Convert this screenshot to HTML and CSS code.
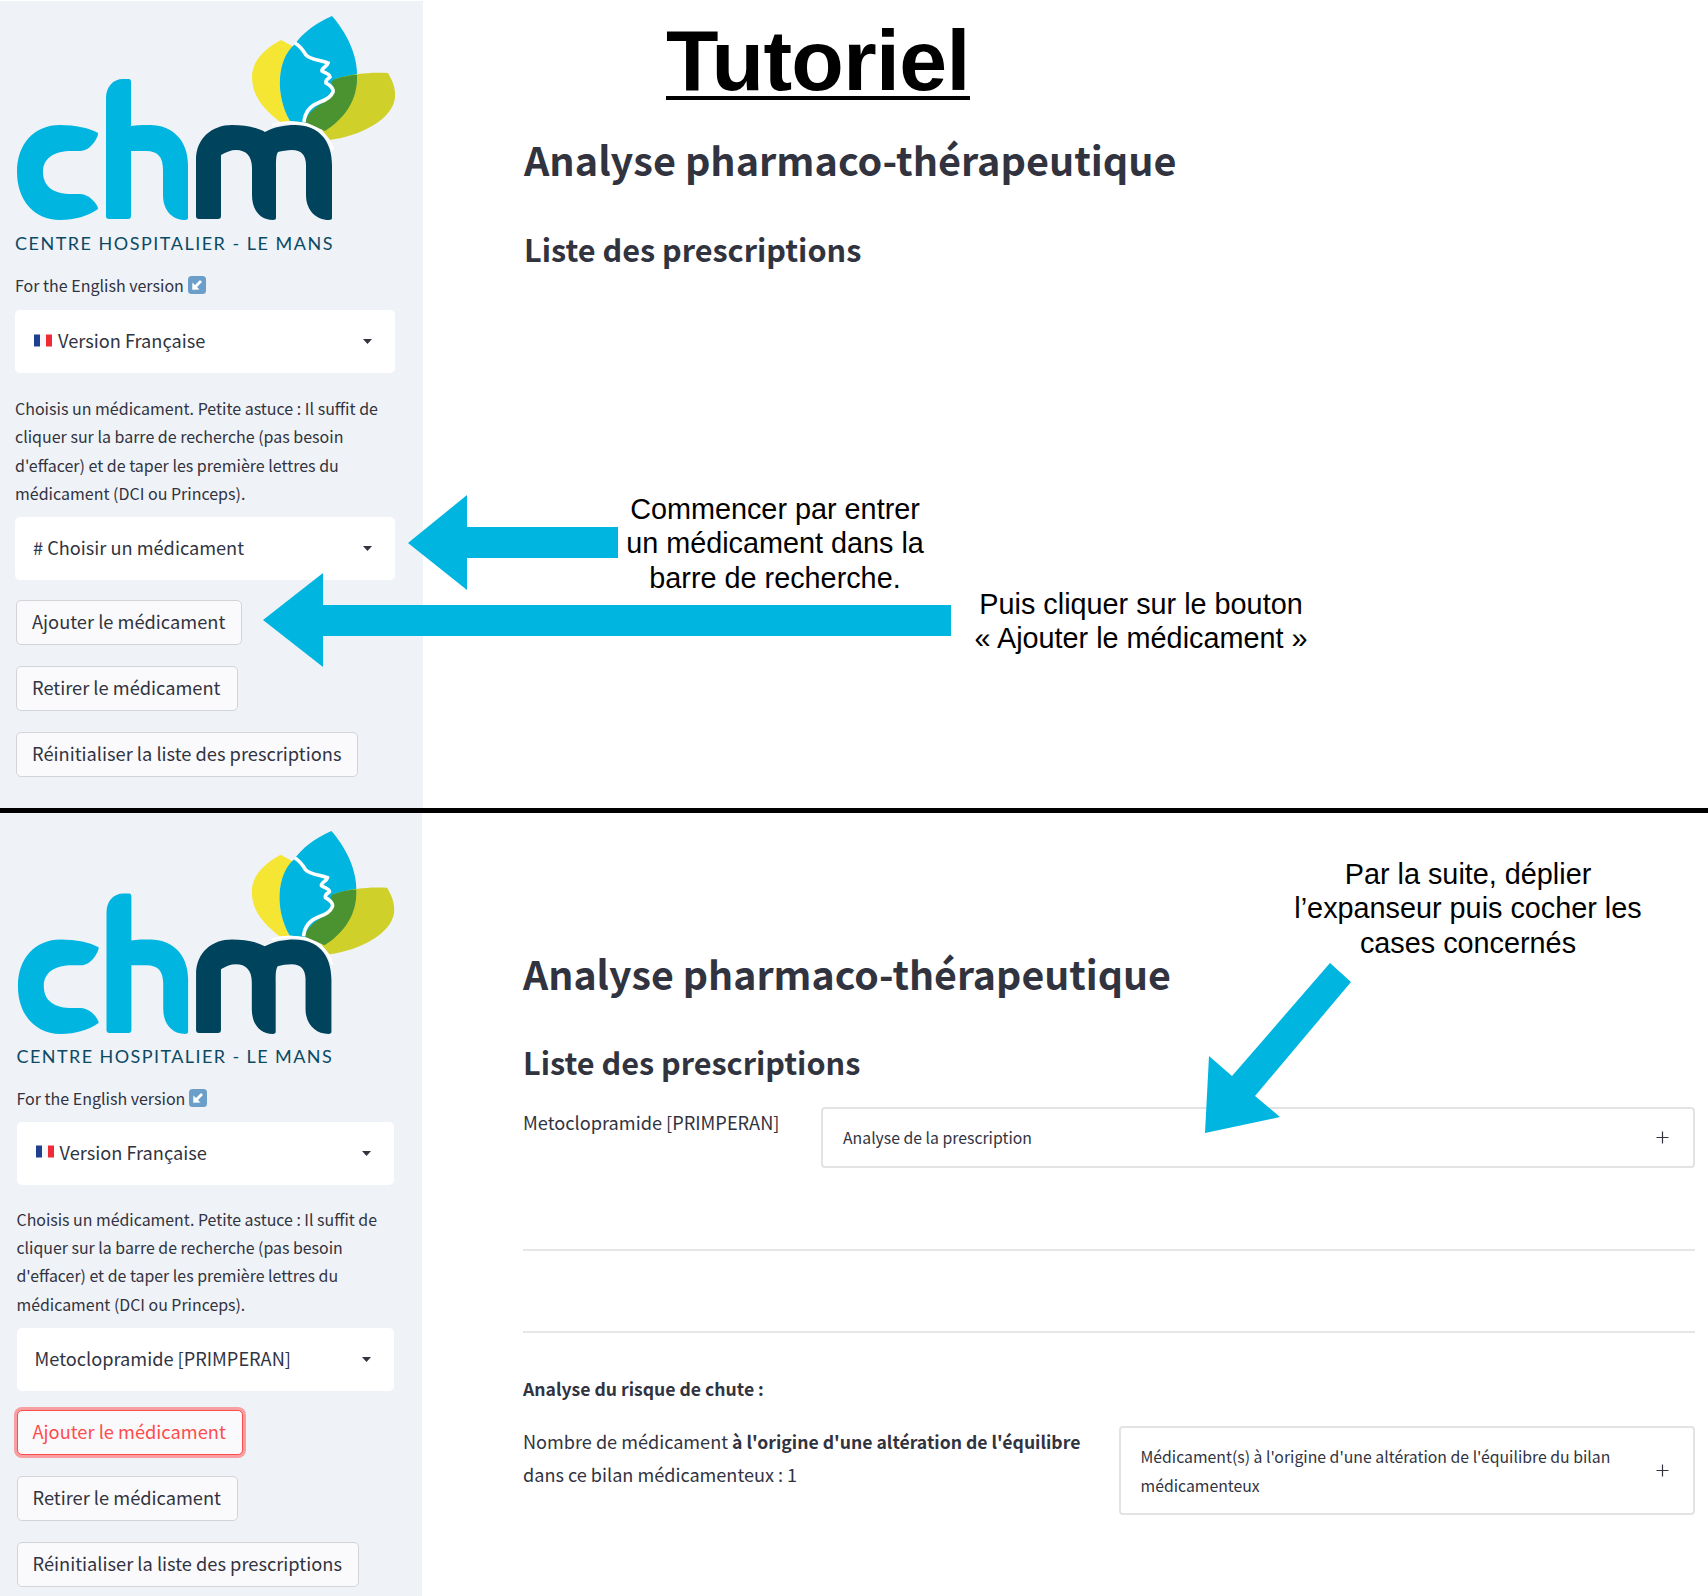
FILE: index.html
```html
<!DOCTYPE html>
<html lang="fr">
<head>
<meta charset="utf-8">
<title>Tutoriel</title>
<link rel="stylesheet" href="styles.css">
</head>
<body>
<svg class="defs" width="0" height="0" aria-hidden="true">
  <symbol id="chm" viewBox="0 1 423 230">
    <path fill="#f5e633" d="M281,40 L294,47 C277,60 275,95 290,121 L280,122 C265,110 252,97 252,77 C252,60 266,48 281,40Z"/>
    <path fill="#00b5e0" d="M332,16 C314,24 303,33 294,45 C277,60 275,95 290,121 L310,123 L325,130 C345,118 357,100 357,77 C358,55 346,32 332,16Z"/>
    <path fill="#cfd12a" d="M333,80 C348,74 370,72 388,73 C392,80 396,88 395,98 C392,120 360,136 330,140 L322,130 C345,118 357,100 357,76 C350,76 340,78 333,80Z"/>
    <path fill="#4b9331" d="M333,80 C340,77 350,75 357,75 C358,100 345,118 325,131 L305,122 C308,112 318,105 328,100 C336,95 335,88 331,83Z"/>
    <path fill="none" stroke="#fff" stroke-width="3.6" d="M295,43 C300,46 303,50 306,55 C311,60 320,60 328,63 C327,67 321,68 322,71 C325,73 330,74 330,77 C328,79 325,80 326,83 C330,85 334,89 333,92 C331,97 326,100 320,102 C312,105 305,110 304,122"/>
    <path fill="#00b5e0" d="M98,133 C99,135 92,151 80,151 L72,151 C54,151 43,158 43,172 C43,187 54,194 72,194 L80,194 C90,194 99,206 98,209 C88,216 75,220 60,220 C34,220 17,200 17,172 C17,144 34,125 60,125 C75,125 90,128 98,133Z"/>
    <path fill="#00b5e0" d="M123,79 L129,79 C130,79 131,80 131,82 L131,126 C137,125 142,125 150,125 C172,125 188,140 188,165 L188,218 C188,219 187,220 185,220 C172,220 163,210 163,195 L163,170 C163,157 158,151 146,151 L131,151 L131,216 C131,218 130,219 128,219 L109,219 C107,219 106,218 106,216 L106,98 C106,87 113,79 123,79Z"/>
    <path fill="#00435c" d="M196,160 C196,138 212,125 232,125 C245,125 256,127 265,132 C274,127 284,125 295,125 C318,125 332,140 332,165 L332,218 C332,219 331,220 329,220 C316,220 306,210 306,195 L306,165 C306,155 301,150 292,150 C287,150 282,151 278,152 C276,155 276,160 276,168 L276,218 C276,219 275,220 273,220 C260,220 252,210 252,195 L252,168 C252,156 246,150 236,150 C231,150 226,152 221,155 L221,216 C221,218 220,219 218,219 L199,219 C197,219 196,218 196,216Z"/>
    <path fill="none" stroke="#fff" stroke-width="2.4" d="M272,125 C281,122 290,122 298,123 C316,125 328,135 333,150"/>
  </symbol>
  <symbol id="flag" viewBox="0 0 18 13">
    <rect width="6" height="12" y="0.5" fill="#1f3f8f"/>
    <rect width="6" height="12" x="6" y="0.5" fill="#f7f7fa"/>
    <rect width="6" height="12" x="12" y="0.5" fill="#ee2a35"/>
  </symbol>
  <symbol id="arrow-emoji" viewBox="0 0 18 18">
    <rect width="18" height="18" rx="3.5" fill="#6b9fc9"/>
    <path fill="#fff" d="M14 6 L9 11 L11.5 13.6 L4.2 13.8 L4.4 6.5 L7 9 L12 4Z"/>
  </symbol>
  <symbol id="caret" viewBox="0 0 9 5">
    <path fill="#31333f" d="M0 0H9L4.5 5Z"/>
  </symbol>
  <symbol id="plus" viewBox="0 0 13 13">
    <path stroke="#31333f" stroke-width="1.2" d="M6.5 0.5V12.5M0.5 6.5H12.5"/>
  </symbol>
</svg>

<section class="panel panel-top">
  <aside class="sidebar">
    <svg class="logo"><use href="#chm"/></svg>
    <p class="logo-caption">CENTRE HOSPITALIER - LE MANS</p>
    <p class="lang-label">For the English version <svg class="emoji"><use href="#arrow-emoji"/></svg></p>
    <div class="select">
      <span class="select-value"><svg class="flag"><use href="#flag"/></svg>Version Française</span>
      <svg class="caret"><use href="#caret"/></svg>
    </div>
    <p class="hint">Choisis un médicament. Petite astuce : Il suffit de cliquer sur la barre de recherche (pas besoin d'effacer) et de taper les première lettres du médicament (DCI ou Princeps).</p>
    <div class="select select-med">
      <span class="select-value"># Choisir un médicament</span>
      <svg class="caret"><use href="#caret"/></svg>
    </div>
    <div class="actions">
      <button class="btn">Ajouter le médicament</button>
      <button class="btn">Retirer le médicament</button>
      <button class="btn">Réinitialiser la liste des prescriptions</button>
    </div>
  </aside>
  <main class="content">
    <h1 class="tuto"><span>Tutoriel</span></h1>
    <h2 class="title">Analyse pharmaco-thérapeutique</h2>
    <h3 class="subtitle">Liste des prescriptions</h3>
  </main>
  <svg class="overlay" viewBox="0 1 1708 807">
    <path fill="#00b5e0" d="M408,543 L467,495 V527 H618 V558 H467 V590Z"/>
    <path fill="#00b5e0" d="M263,620 L323,573 V605 H951 V636 H323 V667Z"/>
  </svg>
  <p class="note note-first">Commencer par entrer<br>un médicament dans la<br>barre de recherche.</p>
  <p class="note note-second">Puis cliquer sur le bouton<br>« Ajouter le médicament »</p>
</section>

<div class="separator"></div>

<section class="panel panel-bottom">
  <aside class="sidebar">
    <svg class="logo"><use href="#chm"/></svg>
    <p class="logo-caption">CENTRE HOSPITALIER - LE MANS</p>
    <p class="lang-label">For the English version <svg class="emoji"><use href="#arrow-emoji"/></svg></p>
    <div class="select">
      <span class="select-value"><svg class="flag"><use href="#flag"/></svg>Version Française</span>
      <svg class="caret"><use href="#caret"/></svg>
    </div>
    <p class="hint">Choisis un médicament. Petite astuce : Il suffit de cliquer sur la barre de recherche (pas besoin d'effacer) et de taper les première lettres du médicament (DCI ou Princeps).</p>
    <div class="select select-med">
      <span class="select-value">Metoclopramide [PRIMPERAN]</span>
      <svg class="caret"><use href="#caret"/></svg>
    </div>
    <div class="actions">
      <button class="btn btn-focus">Ajouter le médicament</button>
      <button class="btn">Retirer le médicament</button>
      <button class="btn">Réinitialiser la liste des prescriptions</button>
    </div>
  </aside>
  <main class="content">
    <h2 class="title">Analyse pharmaco-thérapeutique</h2>
    <h3 class="subtitle">Liste des prescriptions</h3>
    <div class="row row-drug">
      <p class="drug">Metoclopramide [PRIMPERAN]</p>
      <div class="expander">
        <span>Analyse de la prescription</span>
        <svg class="plus"><use href="#plus"/></svg>
      </div>
    </div>
    <hr class="rule rule-first">
    <hr class="rule rule-second">
    <p class="risk-title">Analyse du risque de chute :</p>
    <div class="row row-risk">
      <p class="risk">Nombre de médicament <strong>à l'origine d'une altération de l'équilibre</strong> dans ce bilan médicamenteux : 1</p>
      <div class="expander expander-tall">
        <span>Médicament(s) à l'origine d'une altération de l'équilibre du bilan médicamenteux</span>
        <svg class="plus"><use href="#plus"/></svg>
      </div>
    </div>
  </main>
  <svg class="overlay" viewBox="0 813 1708 783">
    <path fill="#00b5e0" d="M1330,963 L1351,982 L1255,1096 L1280,1117 L1205,1133 L1209,1056 L1232,1076Z"/>
  </svg>
  <p class="note note-third">Par la suite, déplier<br>l’expanseur puis cocher les<br>cases concernés</p>
</section>
</body>
</html>
```

FILE: styles.css
```css
* { box-sizing: border-box; }
html, body { margin: 0; padding: 0; background: #fff; }
body {
  width: 1708px;
  font-family: "Noto Sans CJK SC", "Source Sans Pro", "Noto Sans", sans-serif;
  color: #31333f;
}
p, h1, h2, h3 { margin: 0; }
.defs { position: absolute; }

.panel { position: relative; display: flex; }
.panel-top { height: 807px; margin-top: 1px; }
.panel-bottom { height: 783px; }
.separator { height: 5px; background: #000; }

.sidebar { background: #eff2f7; flex: none; display: flex; flex-direction: column; }
.panel-top .sidebar { width: 423px; padding-left: 15px; padding-right: 28px; }
.panel-bottom .sidebar { width: 422px; padding-left: 16.5px; padding-right: 28px; }

.logo { display: block; flex: none; width: 423px; height: 230px; margin-left: -15px; }
.panel-bottom .logo { width: 421px; height: 228.9px; margin-left: -15.5px; margin-top: 2.7px; }
.logo-caption { font-family: Lato, "Noto Sans", sans-serif; font-size: 18px; line-height: 24px; letter-spacing: 1.5px; color: #0b4a64; white-space: nowrap; }
.panel-bottom .logo-caption { margin-top: -1px; letter-spacing: 1.42px; }

.lang-label { display: flex; align-items: center; gap: 4px; font-size: 16px; line-height: 28px; margin-top: 16px; }
.emoji { width: 18px; height: 18px; flex: none; }
.flag { width: 18px; height: 13px; flex: none; margin-left: 1px; }

.select { display: flex; align-items: center; justify-content: space-between; height: 63px; margin-top: 11px; padding: 0 23px 3px 18px; background: #fff; border-radius: 5px; font-size: 18.2px; line-height: 28px; }
.panel-bottom .select { margin-top: 10px; }
.select-value { display: flex; align-items: center; gap: 6px; }
.caret { width: 9px; height: 5px; flex: none; margin-top: 3px; }
.panel-top .select-med { margin-top: 9px; }
.panel-bottom .select-med { margin-top: 9px; }

.hint { font-size: 16px; line-height: 28.4px; margin-top: 21px; }
.panel-bottom .hint { font-size: 15.9px; margin-top: 21px; }

.actions { display: flex; flex-direction: column; align-items: flex-start; gap: 21px; margin-top: 20px; padding-left: 1px; }
.panel-bottom .actions { padding-left: 0; margin-top: 19px; }
.btn { height: 45px; padding: 0 16px 3px 15px; background: #fafafc; border: 1.5px solid #d3d4d8; border-radius: 5px; font: inherit; font-size: 18.25px; line-height: 28px; color: #31333f; }
.btn-focus { color: #ff4b4b; border-color: #ff4b4b; box-shadow: 0 0 0 3px rgba(255, 75, 75, .5); }

.content { flex: 1; min-width: 0; padding-right: 13px; }
.panel-top .content { padding-left: 101px; }
.panel-bottom .content { padding-left: 101px; padding-top: 136px; }

.tuto { padding-left: 142px; font-family: "Liberation Sans", Arial, sans-serif; font-size: 86px; font-weight: 700; letter-spacing: -0.65px; line-height: 90px; color: #000; }
.tuto span { display: inline-block; border-bottom: 4px solid #000; height: 99px; line-height: 118px; margin-bottom: 35px; }
.title { font-size: 39.6px; font-weight: 600; line-height: 48px; }
.panel-bottom .title { font-size: 39.3px; }
.subtitle { font-size: 30.6px; font-weight: 600; line-height: 40px; }
.panel-top .subtitle { margin-top: 46px; }
.panel-bottom .subtitle { margin-top: 45px; }

.row { display: flex; align-items: flex-start; }
.row-drug { margin-top: 25px; gap: 42px; }
.drug { flex: none; width: 256px; font-size: 18.2px; line-height: 28px; margin-top: 1px; white-space: nowrap; }
.expander { flex: 1; min-width: 0; display: flex; align-items: center; justify-content: space-between; height: 61px; padding: 0 24px 0 20px; border: 2px solid #e3e3e6; border-radius: 4px; font-size: 15.8px; line-height: 29px; }
.plus { width: 13px; height: 13px; flex: none; margin-left: 24px; }
.expander-tall { height: 89px; }

.rule { height: 2px; border: 0; margin: 0; background: #e6e6e8; }
.rule-first { margin-top: 81px; }
.rule-second { margin-top: 80px; }

.risk-title { font-size: 17.6px; font-weight: 700; line-height: 28px; margin-top: 42px; }
.row-risk { margin-top: 23px; gap: 28.5px; }
.risk { flex: none; width: 567px; font-size: 18.1px; line-height: 32.6px; margin-top: -1px; }
.risk strong { font-size: 17.6px; font-weight: 700; line-height: 1; }

.overlay { position: absolute; left: 0; top: 0; width: 1708px; height: 100%; pointer-events: none; }
.note { position: absolute; font-family: "Liberation Sans", Arial, sans-serif; font-size: 28.8px; line-height: 34.3px; color: #000; text-align: center; white-space: nowrap; transform: translateX(-50%); }
.note-first { left: 775px; top: 491px; }
.note-second { left: 1141px; top: 586px; }
.note-third { left: 1468px; top: 44px; }
```
